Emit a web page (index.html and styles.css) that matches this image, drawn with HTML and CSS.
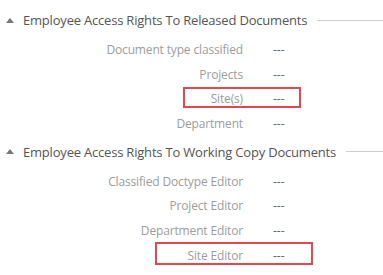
FILE: index.html
```html
<!DOCTYPE html>
<html lang="en">

<head>
    <meta charset="UTF-8">
    <title>Employee Access Rights</title>
    <link rel="stylesheet" href="styles.css">
</head>

<body>
    <!--已发布文档-->
    <div class="section">
        <div class="section-head">
            <span class="caret"></span>
            <span class="section-title">Employee Access Rights To Released Documents</span>
            <span class="rule"></span>
        </div>
        <div class="rows">
            <div class="row"><span class="label">Document type classified</span><span class="value">---</span></div>
            <div class="row"><span class="label">Projects</span><span class="value">---</span></div>
            <div class="row"><span class="label">Site(s)</span><span class="value">---</span><span class="mark mark-site"></span></div>
            <div class="row"><span class="label">Department</span><span class="value">---</span></div>
        </div>
    </div>

    <!--工作副本文档-->
    <div class="section">
        <div class="section-head">
            <span class="caret"></span>
            <span class="section-title">Employee Access Rights To Working Copy Documents</span>
            <span class="rule"></span>
        </div>
        <div class="rows">
            <div class="row"><span class="label">Classified Doctype Editor</span><span class="value">---</span></div>
            <div class="row"><span class="label">Project Editor</span><span class="value">---</span></div>
            <div class="row"><span class="label">Department Editor</span><span class="value">---</span></div>
            <div class="row"><span class="label">Site Editor</span><span class="value">---</span><span class="mark mark-editor"></span></div>
        </div>
    </div>
</body>

</html>
```
FILE: styles.css
```css
* {
    margin: 0;
    padding: 0;
}

body {
    background-color: #fff;
    font-family: "Open Sans", "Noto Sans", sans-serif;
    padding-top: 10px;
}

.section + .section {
    margin-top: 6px;
}

.section-head {
    display: flex;
    align-items: center;
    height: 20px;
    padding-left: 6px;
}

.caret {
    width: 0;
    height: 0;
    border-left: 4px solid transparent;
    border-right: 4px solid transparent;
    border-bottom: 5px solid #777;
    margin-right: 9px;
}

.section-title {
    font-size: 13px;
    letter-spacing: -0.2px;
    color: #555;
    white-space: nowrap;
}

.rule {
    flex: 1;
    height: 1px;
    background-color: #ccc;
    margin-left: 10px;
}

.rows {
    margin-top: 7px;
}

.row {
    display: grid;
    grid-template-columns: 243px auto;
    column-gap: 30px;
    align-items: center;
    height: 24.7px;
    font-size: 12px;
    position: relative;
}

.label {
    text-align: right;
    color: #9c9c9c;
    letter-spacing: -0.15px;
    white-space: nowrap;
}

.value {
    color: #666;
}

/*标注框*/
.mark {
    position: absolute;
    border: 2px solid #e8464e;
    box-sizing: border-box;
}

.mark-site {
    left: 183px;
    width: 118px;
    top: 1px;
    height: 21px;
}

.mark-editor {
    left: 155px;
    width: 158px;
    top: -1px;
    height: 23px;
}
```
